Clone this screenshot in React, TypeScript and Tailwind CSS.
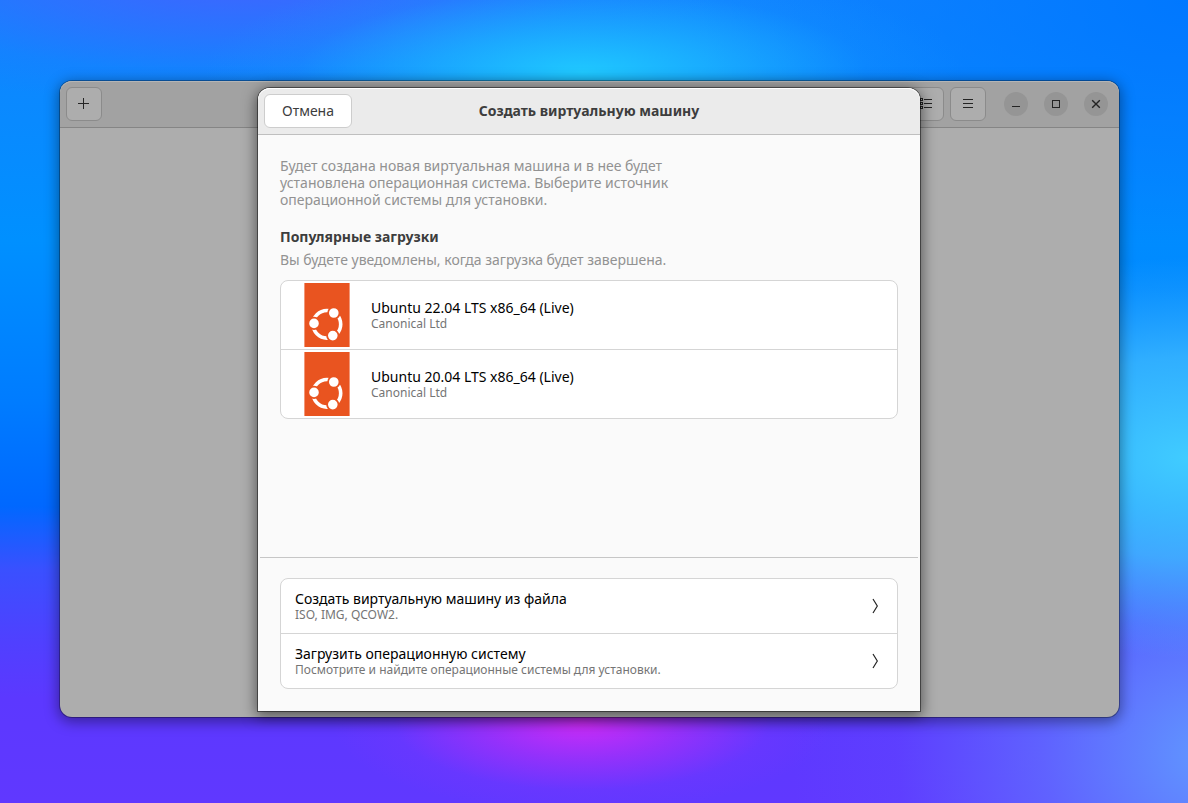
import type { ReactNode } from 'react';

const popularDownloads = [
  { id: 'ubuntu-22', name: 'Ubuntu 22.04 LTS x86_64 (Live)', vendor: 'Canonical Ltd' },
  { id: 'ubuntu-20', name: 'Ubuntu 20.04 LTS x86_64 (Live)', vendor: 'Canonical Ltd' },
];

const sources = [
  { id: 'file', title: 'Создать виртуальную машину из файла', hint: 'ISO, IMG, QCOW2.' },
  {
    id: 'download',
    title: 'Загрузить операционную систему',
    hint: 'Посмотрите и найдите операционные системы для установки.',
  },
];

function UbuntuLogo() {
  return (
    <svg viewBox="0 0 46 64" className="h-16 w-[46px] shrink-0" aria-hidden="true">
      <rect x="0.4" width="45.2" height="64" fill="#e95420" />
      <circle cx="22.9" cy="41.3" r="13.8" fill="none" stroke="#fff" strokeWidth="3.6" />
      <g fill="#fff" stroke="#e95420" strokeWidth="1.8">
        <circle cx="10" cy="40.4" r="5.7" />
        <circle cx="29.8" cy="30" r="5.7" />
        <circle cx="28.8" cy="52.6" r="5.7" />
      </g>
    </svg>
  );
}

function HeaderButton({ label, children }: { label: string; children: ReactNode }) {
  return (
    <button
      type="button"
      aria-label={label}
      className="flex h-[34px] w-9 items-center justify-center rounded-md border border-[#8b8b8b] bg-[#adadad]"
    >
      {children}
    </button>
  );
}

function WindowButton({ label, children }: { label: string; children: ReactNode }) {
  return (
    <button
      type="button"
      aria-label={label}
      className="flex size-6 items-center justify-center rounded-full bg-[#959595]"
    >
      {children}
    </button>
  );
}

function Icon({ children }: { children: ReactNode }) {
  return (
    <svg viewBox="0 0 16 16" className="size-4" fill="none" stroke="#242424" shapeRendering="crispEdges" aria-hidden="true">
      {children}
    </svg>
  );
}

function WindowHeader() {
  return (
    <header className="flex h-[47px] items-center justify-between rounded-t-xl border-b border-[#858585] bg-[#a2a2a2] pr-[11px] pl-1.5 shadow-[inset_0_1px_0_#b5b5b5]">
      <HeaderButton label="Новая виртуальная машина">
        <Icon>
          <path d="M2 7.5h11M7.5 2v11" />
        </Icon>
      </HeaderButton>
      <div className="flex items-center">
        <div className="flex gap-1.5">
          <HeaderButton label="Показать списком">
            <Icon>
              <path d="M6 3.5h8M6 7.5h8M6 11.5h8M2.5 2.5h2v2h-2zM2.5 6.5h2v2h-2zM2.5 10.5h2v2h-2z" />
            </Icon>
          </HeaderButton>
          <HeaderButton label="Меню">
            <Icon>
              <path d="M3 3.5h10M3 7.5h10M3 11.5h10" />
            </Icon>
          </HeaderButton>
        </div>
        <div className="ml-[18px] flex gap-4">
          <WindowButton label="Свернуть">
            <Icon>
              <path d="M4 10.5h8" />
            </Icon>
          </WindowButton>
          <WindowButton label="Развернуть">
            <Icon>
              <path d="M4.5 4.5h7v7h-7z" />
            </Icon>
          </WindowButton>
          <WindowButton label="Закрыть">
            <svg viewBox="0 0 16 16" className="size-4" stroke="#242424" strokeWidth="1.4" aria-hidden="true">
              <path d="M4.2 4.2l7.6 7.6M11.8 4.2l-7.6 7.6" />
            </svg>
          </WindowButton>
        </div>
      </div>
    </header>
  );
}

function RowText({ title, hint }: { title: string; hint: string }) {
  return (
    <span className="flex flex-col">
      <span className="text-black">{title}</span>
      <span className="text-xs leading-4 text-[#757575]">{hint}</span>
    </span>
  );
}

function CreateDialog() {
  return (
    <section
      role="dialog"
      aria-labelledby="dialog-title"
      className="absolute top-[7px] right-[17px] bottom-1.5 left-4 mx-auto flex max-w-[662px] flex-col rounded-t-xl bg-[#fafafa] shadow-[0_0_0_1px_rgba(0,0,0,0.45),0_3px_14px_2px_rgba(0,0,0,0.5)]"
    >
      <header className="grid h-[47px] shrink-0 grid-cols-[1fr_auto_1fr] items-center rounded-t-xl border-b border-[#bfbfbf] bg-[#ebebeb] px-1.5 shadow-[inset_0_1px_0_#fff]">
        <button
          type="button"
          className="h-[34px] w-[88px] justify-self-start rounded-md border border-[#cdcdcd] bg-white pb-0.5 text-[#3d3d3d]"
        >
          Отмена
        </button>
        <h1 id="dialog-title" className="pb-0.5 font-bold text-[#3d3d3d]">
          Создать виртуальную машину
        </h1>
      </header>

      <div className="grow px-[22px] pt-[22px]">
        <p className="max-w-[410px] text-[#929292]">
          Будет создана новая виртуальная машина и в нее будет установлена операционная система. Выберите источник
          операционной системы для установки.
        </p>
        <h2 className="mt-5 font-bold text-[#3d3d3d]">Популярные загрузки</h2>
        <p className="mt-1.5 text-[#929292]">Вы будете уведомлены, когда загрузка будет завершена.</p>
        <ul className="mt-3 divide-y divide-[#d5d5d5] rounded-lg border border-[#d5d5d5] bg-white">
          {popularDownloads.map((item) => (
            <li key={item.id}>
              <button type="button" className="flex h-17 w-full items-center gap-[21px] pl-[23px] text-left">
                <UbuntuLogo />
                <RowText title={item.name} hint={item.vendor} />
              </button>
            </li>
          ))}
        </ul>
      </div>

      <div className="mx-0.5 border-t border-[#c6c6c6] px-5 pt-5 pb-[22px]">
        <ul className="divide-y divide-[#d5d5d5] rounded-lg border border-[#d5d5d5] bg-white">
          {sources.map((source) => (
            <li key={source.id}>
              <button type="button" className="flex h-[54px] w-full items-center justify-between px-3.5 text-left">
                <RowText title={source.title} hint={source.hint} />
                <svg viewBox="0 0 16 16" className="size-4" fill="none" stroke="#242424" strokeWidth="1.2" aria-hidden="true">
                  <path d="M6 1l4.3 7L6 15" />
                </svg>
              </button>
            </li>
          ))}
        </ul>
      </div>
    </section>
  );
}

export default function App() {
  return (
    <div className="flex min-h-screen flex-col bg-[radial-gradient(ellipse_250px_90px_at_49%_90%,#cc2cf8,rgba(184,44,248,0.6)_40%,rgba(150,50,255,0.15)_75%,transparent),radial-gradient(ellipse_380px_110px_at_49%_9%,#20c8ff,rgba(32,190,255,0.5)_45%,rgba(32,170,255,0.12)_75%,transparent),radial-gradient(ellipse_340px_200px_at_100%_57%,#40ccff,rgba(64,190,255,0.75)_50%,rgba(64,180,255,0.2)_85%,transparent),radial-gradient(ellipse_420px_380px_at_102%_94%,#6098ff,rgba(96,140,255,0.5)_40%,rgba(90,100,255,0.15)_75%,transparent),radial-gradient(ellipse_480px_130px_at_20%_-3%,#4064ff,rgba(64,100,255,0.5)_45%,rgba(64,100,255,0.12)_75%,transparent),radial-gradient(ellipse_500px_300px_at_100%_0%,#0078ff,transparent),linear-gradient(#1284ff,#0090ff_30%,#007cff_50%,#0068ff_63%,#3a50ff_71%,#5040ff_80%,#5c38ff_87%,#6038ff)] pt-[81px] pr-[69px] pb-[86px] pl-[60px] font-['Noto_Sans',sans-serif] text-sm leading-[17px]">
      <main className="relative flex min-h-[560px] grow flex-col rounded-xl bg-[#adadad] shadow-[0_0_0_1px_rgba(0,0,0,0.3),0_3px_14px_2px_rgba(0,0,0,0.4)]">
        <WindowHeader />
        <CreateDialog />
      </main>
    </div>
  );
}
